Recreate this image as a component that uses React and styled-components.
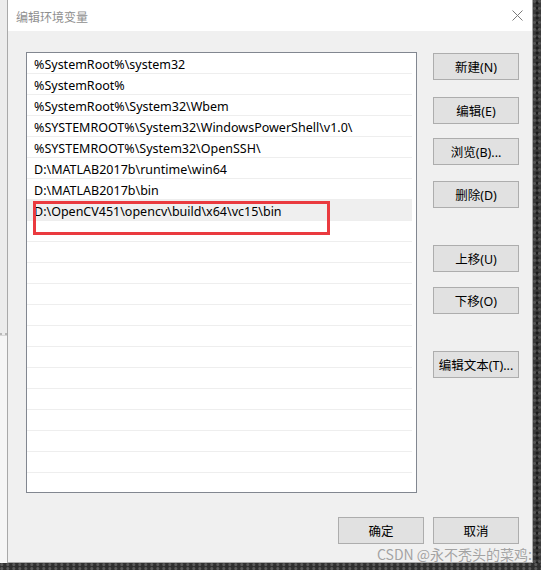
import React from 'react';
import styled, { createGlobalStyle } from 'styled-components';

const GlobalStyle = createGlobalStyle`
  html, body {
    margin: 0;
    padding: 0;
    background: #2e2e2e;
  }
  * {
    box-sizing: border-box;
  }
`;

const FONT = `"Segoe UI", "Noto Sans", "Noto Sans CJK SC", sans-serif`;

const paths = [
  '%SystemRoot%\\system32',
  '%SystemRoot%',
  '%SystemRoot%\\System32\\Wbem',
  '%SYSTEMROOT%\\System32\\WindowsPowerShell\\v1.0\\',
  '%SYSTEMROOT%\\System32\\OpenSSH\\',
  'D:\\MATLAB2017b\\runtime\\win64',
  'D:\\MATLAB2017b\\bin',
  'D:\\OpenCV451\\opencv\\build\\x64\\vc15\\bin',
];

const ROW_COUNT = 21;
const SELECTED = 7;

// 右侧按钮，gap 是与上一个按钮的间距
const sideButtons = [
  { label: '新建(N)', gap: 1 },
  { label: '编辑(E)', gap: 17 },
  { label: '浏览(B)...', gap: 14 },
  { label: '删除(D)', gap: 16 },
  { label: '上移(U)', gap: 37 },
  { label: '下移(O)', gap: 15 },
  { label: '编辑文本(T)...', gap: 37 },
];

const App = () => {
  const rows = Array.from({ length: ROW_COUNT }, (_, i) => paths[i] || '');

  return (
    <>
      <GlobalStyle />
      <Screen>
        <Desk>
          <LeftStrip>
            <OtherWindow />
            <OtherWindowBottom />
          </LeftStrip>
          <Dialog>
            <TitleBar>
              <Title>编辑环境变量</Title>
              <CloseButton>
                <svg width="11" height="11" viewBox="0 0 11 11">
                  <path d="M0.5 0.5 L10.5 10.5 M10.5 0.5 L0.5 10.5" stroke="#7a7a7a" strokeWidth="1" fill="none" />
                </svg>
              </CloseButton>
            </TitleBar>
            <Body>
              <Main>
                <PathList>
                  {rows.map((text, i) => (
                    <Row key={i} selected={i === SELECTED}>
                      {text}
                    </Row>
                  ))}
                  <Mark />
                </PathList>
                <SideColumn>
                  {sideButtons.map((b) => (
                    <Button key={b.label} gap={b.gap}>
                      {b.label}
                    </Button>
                  ))}
                </SideColumn>
              </Main>
              <Footer>
                <Button>确定</Button>
                <Button>取消</Button>
              </Footer>
            </Body>
          </Dialog>
          <RightStrip />
        </Desk>
        <BottomStrip />
        <Watermark>CSDN @永不秃头的菜鸡:</Watermark>
      </Screen>
    </>
  );
};

export default App;

const Screen = styled.div`
  position: relative;
  width: 541px;
  height: 570px;
  overflow: hidden;
  display: flex;
  flex-direction: column;
  font-family: ${FONT};
`;

const Desk = styled.div`
  display: flex;
  height: 563px;
`;

const LeftStrip = styled.div`
  width: 7px;
  display: flex;
  flex-direction: column;
`;

const OtherWindow = styled.div`
  height: 335px;
  background: #ececec;
  border-bottom: 2px dotted #b8b8b8;
`;

const OtherWindowBottom = styled.div`
  flex: 1;
  background: #f6f6f6;
  border-top: 1px solid #d8d8d8;
`;

const Dialog = styled.div`
  width: 526px;
  display: flex;
  flex-direction: column;
  border: 1px solid #a9a9a9;
  border-top: none;
  background: #f0f0f0;
`;

const TitleBar = styled.div`
  height: 31px;
  background: #ffffff;
  display: flex;
  align-items: center;
  justify-content: space-between;
  padding: 0 9px 0 8px;
`;

const Title = styled.span`
  font-family: "Noto Sans CJK SC", sans-serif;
  font-size: 12px;
  color: #8f8f8f;
  padding-top: 2px;
`;

const CloseButton = styled.div`
  width: 11px;
  height: 11px;
  display: flex;
`;

const Body = styled.div`
  flex: 1;
  display: flex;
  flex-direction: column;
  padding: 21px 13px 0 18px;
`;

const Main = styled.div`
  display: flex;
  gap: 16px;
`;

const PathList = styled.div`
  position: relative;
  width: 391px;
  height: 441px;
  background: #ffffff;
  border: 1px solid #828790;
  overflow: hidden;
`;

const Row = styled.div`
  height: 21px;
  line-height: 20px;
  padding: 2px 0 0 7px;
  font-size: 12.5px;
  color: #000;
  white-space: nowrap;
  border-bottom: 1px solid #eeeeee;
  background: ${(p) => (p.selected ? '#efefef' : '#ffffff')};
  margin-right: 4px;
`;

const Mark = styled.div`
  position: absolute;
  left: 6px;
  top: 148px;
  width: 297px;
  height: 34px;
  border: 3px solid #ea3a3f;
`;

const SideColumn = styled.div`
  display: flex;
  flex-direction: column;
`;

const Button = styled.button`
  width: 86px;
  height: 27px;
  margin-top: ${(p) => (p.gap ? `${p.gap}px` : '0')};
  padding: 0;
  background: #e1e1e1;
  border: 1px solid #adadad;
  font-family: ${FONT};
  font-size: 12.5px;
  color: #000;
  cursor: default;
`;

const Footer = styled.div`
  display: flex;
  justify-content: flex-end;
  gap: 9px;
  margin-top: 24px;
`;

const RightStrip = styled.div`
  flex: 1;
  background:
    radial-gradient(circle at 30% 20%, #555 0 1px, transparent 2px) 0 0 / 5px 7px,
    radial-gradient(circle at 70% 60%, #1c1c1c 0 1px, transparent 2px) 0 0 / 6px 5px,
    #3a3a3a;
`;

const BottomStrip = styled.div`
  flex: 1;
  background:
    radial-gradient(circle at 30% 40%, #5a5a5a 0 1px, transparent 2px) 0 0 / 6px 4px,
    #2f2f2f;
`;

const Watermark = styled.span`
  position: absolute;
  right: 9px;
  bottom: 6px;
  font-family: "Noto Sans CJK SC", sans-serif;
  font-size: 14px;
  color: #a3a3a3;
  text-shadow: 0 0 1px rgba(255, 255, 255, 0.6);
`;
